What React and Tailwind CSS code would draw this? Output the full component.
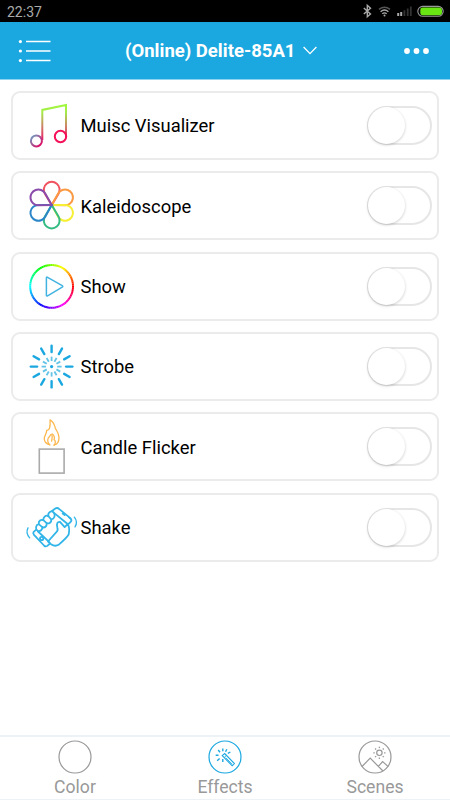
import React from "react";

const BLUE = "#1ba8e0";

function MusicIcon() {
  return (
    <svg className="h-[65px] w-[60px] shrink-0" viewBox="20 93 60 65" fill="none" strokeWidth="2">
      <defs>
        <linearGradient id="stem" gradientUnits="userSpaceOnUse" x1="0" y1="104" x2="0" y2="140">
          <stop offset="0" stopColor="#a0fa3c" />
          <stop offset="0.25" stopColor="#a5e84a" />
          <stop offset="0.65" stopColor="#cf7b68" />
          <stop offset="1" stopColor="#ee1560" />
        </linearGradient>
        <linearGradient id="note" x1="0" y1="0" x2="1" y2="1">
          <stop offset="0.1" stopColor="#7396bd" />
          <stop offset="0.9" stopColor="#e00b65" />
        </linearGradient>
      </defs>
      <path d="M42.3 140V109.9L66 104.9V137" stroke="url(#stem)" />
      <circle cx="36.4" cy="140.9" r="5.5" stroke="url(#note)" />
      <circle cx="60.5" cy="136.5" r="5.7" stroke="#f5105a" />
    </svg>
  );
}

const petals = ["#f0525f", "#fb9a42", "#f7ef32", "#35bc83", "#2b86c8", "#8a4bab"];

function FlowerIcon() {
  return (
    <svg className="h-[65px] w-[60px] shrink-0" viewBox="20 173.3 60 65" fill="none" strokeWidth="2">
      <g transform="translate(51.7 205.4)">
        {petals.map((color, i) => (
          <path key={color} d="M0 0L-6.8 -11.4A7.9 7.9 0 1 1 6.8 -11.4Z" stroke={color} transform={`rotate(${i * 60})`} />
        ))}
      </g>
    </svg>
  );
}

function ShowIcon() {
  return (
    <svg className="h-[65px] w-[60px] shrink-0" viewBox="20 253.6 60 65" fill="none">
      <g transform="translate(51.6 286)" strokeWidth="2">
        {Array.from({ length: 72 }, (_, i) => (
          <path key={i} d="M-1 -21.4H1" stroke={`hsl(${(450 - i * 5) % 360} 100% 50%)`} transform={`rotate(${i * 5})`} />
        ))}
      </g>
      <path d="M47.6 276.9L62.2 285.3Q63.4 286 62.2 286.8L47.6 295.4Q46.4 296 46.4 294.8V277.5Q46.4 276.2 47.6 276.9Z" stroke="#42b3e0" strokeWidth="1.5" />
    </svg>
  );
}

function StrobeIcon() {
  return (
    <svg className="h-[65px] w-[60px] shrink-0" viewBox="20 333.9 60 65" fill="none" strokeLinecap="round">
      <g transform="translate(51.6 366.5)">
        {Array.from({ length: 12 }, (_, i) => (
          <g key={i} transform={`rotate(${i * 30})`}>
            <path d="M0 -14.5V-20.8" stroke={BLUE} strokeWidth="2.4" />
            <path d="M0 -5.6V-10" stroke="#63c4e6" strokeWidth="1.8" strokeLinecap="butt" />
          </g>
        ))}
        <circle r="1.6" fill={BLUE} />
      </g>
    </svg>
  );
}

function CandleIcon() {
  return (
    <svg className="h-[65px] w-[60px] shrink-0" viewBox="20 414.2 60 65" fill="none">
      <g transform="translate(20 412) scale(.33333)" stroke="#fcb64c" strokeWidth="3.8" strokeLinejoin="round" strokeLinecap="round">
        <path d="M90 99C78 97 71 88 73 77C76 68 80 63 80 56C88 57 92 46 90 24C99 30 104 40 106 49C109 56 118 65 117 78C117 91 111 98 102 100" />
        <path d="M88 98C81 90 82 80 88 75C91 71 91 66 98 67C103 73 105 78 102 83C108 88 107 95 102 100" />
        <path d="M96 71C98 78 95 82 95 88" />
      </g>
      <rect x="39.3" y="449.3" width="24.8" height="24" stroke="#aaa" strokeWidth="1.6" />
    </svg>
  );
}

function ShakeIcon() {
  return (
    <svg className="h-[65px] w-[60px] shrink-0 overflow-visible" viewBox="20 494.5 60 65" fill="none">
      <g transform="translate(20 495) scale(.33333)" stroke="#32b5e8" strokeWidth="5.4" strokeLinecap="round" strokeLinejoin="round">
        <path d="M48 103L41 109Q38 113 42 118L72 150Q77 155 82 151L90 144" />
        <path d="M95 47L106 39Q112 35 118 41L151 68Q157 74 152 79L145 86" />
        <path d="M54 108L87 139" />
        <path d="M102 52L141 84" />
        <circle cx="65" cy="129" r="5" />
        <path d="M128 54L134 59" />
        <path d="M53 106C45 101 47 88 56 86C55 76 63 71 70 74C69 64 78 58 85 62C83 50 94 44 101 51C108 61 102 70 94 72C95 80 87 86 80 83C81 93 74 98 67 95C68 102 61 109 53 106Z" />
        <path d="M56 86L67 95M70 74L80 83M85 62L94 72" />
        <path d="M84 138L109 110C114 106 114 102 112 96C109 85 112 78 120 79L134 95L143 86C149 94 148 107 146 117C140 127 126 139 116 148C109 152 100 151 93 146Z" />
        <path d="M24 97C19 107 21 118 29 127M146 65L151 70M163 65C171 75 171 85 165 94" strokeWidth="4" />
      </g>
    </svg>
  );
}

const effects = [
  { name: "Muisc Visualizer", Icon: MusicIcon },
  { name: "Kaleidoscope", Icon: FlowerIcon },
  { name: "Show", Icon: ShowIcon },
  { name: "Strobe", Icon: StrobeIcon },
  { name: "Candle Flicker", Icon: CandleIcon },
  { name: "Shake", Icon: ShakeIcon },
];

function Toggle() {
  return (
    <button role="switch" aria-checked="false" className="ml-auto mr-[5px] flex h-[39px] w-[65px] items-center rounded-full border-2 border-[#e6e6e6] bg-white">
      <span className="-ml-px size-[37px] shrink-0 rounded-full bg-white shadow-[0_1px_3px_rgba(0,0,0,0.2)]" />
    </button>
  );
}

function StatusBar() {
  return (
    <div className="flex h-[22px] items-center bg-black pl-[7px] pr-[6px]">
      <span className="pt-[2px] text-[14px] leading-none text-[#aaa]">22:37</span>
      <svg className="ml-auto h-[22px] w-[90px]" viewBox="354 0 90 22" fill="none">
        <path d="M363.8 8L370.5 14L367.3 16.8V5.3L370.5 8.2L363.8 14" stroke="#aaa" strokeWidth="1.4" />
        <g stroke="#aaa" strokeWidth="1.4">
          <path d="M379 9.4Q384.5 5 390 9.4" stroke="#555" />
          <path d="M380.6 11.7Q384.5 8.4 388.4 11.7" />
          <path d="M382.3 13.7Q384.5 12 386.7 13.7" />
        </g>
        <circle cx="384.5" cy="15.4" r="1" fill="#aaa" />
        <path d="M398.2 16V13M401.2 16V12" stroke="#aaa" strokeWidth="2" />
        <path d="M404.4 16V10.3M407.7 16V8.5M410.8 16V6.5" stroke="#333" strokeWidth="1.8" />
        <rect x="417.8" y="6.4" width="25.4" height="9.8" rx="4.9" stroke="#999" strokeWidth="1.1" />
        <rect x="420" y="7.6" width="22" height="7.6" rx="3" fill="#6ae514" />
        <path d="M419.8 8.5V14" stroke="#000" strokeWidth="1" />
      </svg>
    </div>
  );
}

function Header() {
  return (
    <header className="flex h-[58px] items-center border-b border-[#8dd3ef] bg-[#1ba8e0] pl-[18px] pr-[20.5px] text-white">
      <svg className="h-[26px] w-[34px]" viewBox="18 38 34 26" stroke="white" strokeWidth="1.5" fill="white">
        <path d="M26 41.6H50.5M26 51H50.5M26 60.6H50.5" />
        <g stroke="none">
          <circle cx="20.4" cy="41.6" r="1.6" />
          <circle cx="20.4" cy="51" r="1.6" />
          <circle cx="20.4" cy="60.6" r="1.6" />
        </g>
      </svg>
      <div className="ml-[73px] flex items-center gap-[8px]">
        <h1 className="pt-px text-[18.5px] font-bold leading-none whitespace-nowrap">(Online) Delite-85A1</h1>
        <svg className="h-[9px] w-[14px]" viewBox="0 0 14 9" fill="none" stroke="white" strokeWidth="1.3">
          <path d="M0.6 1L7 7.6L13.4 1" />
        </svg>
      </div>
      <svg className="ml-auto h-[8px] w-[27px]" viewBox="0 0 27 8" fill="white">
        <circle cx="4" cy="4" r="2.9" />
        <circle cx="13.5" cy="4" r="2.9" />
        <circle cx="23" cy="4" r="2.9" />
      </svg>
    </header>
  );
}

function ColorTab() {
  return <circle cx="17" cy="17" r="16" />;
}

function EffectsTab() {
  return (
    <>
      <circle cx="17" cy="17" r="16" />
      <path d="M14.2 15.6L16.7 13.5L26.4 23.6L24.2 25.8Z" strokeWidth="1.1" />
      <path d="M16.1 17.6L18.4 15.4M17.8 17.7L24.2 24.4" strokeWidth="0.9" />
      <path d="M14.8 8.4V11.2M18.8 9.2L17.6 11.7M22.4 12L19.8 13.4M10.2 10L12 12.3M7.7 15.3H10.5M9.2 20.8L11.6 18.6M14.8 19V22" strokeWidth="1.4" />
    </>
  );
}

function ScenesTab() {
  return (
    <>
      <circle cx="17" cy="17" r="16" />
      <path d="M4 26.5L12.2 18.2L25 31M20.4 26.4L24.6 21.6L30 26.4M19.5 25.4L21.2 27.2" />
      <circle cx="21.4" cy="12.8" r="2.7" />
      <g transform="translate(21.4 12.8)" strokeWidth="1.3">
        {Array.from({ length: 8 }, (_, i) => (
          <path key={i} d="M0 -4.7V-6.1" transform={`rotate(${i * 45})`} />
        ))}
      </g>
    </>
  );
}

const tabs = [
  { name: "Color", Icon: ColorTab, active: false },
  { name: "Effects", Icon: EffectsTab, active: true },
  { name: "Scenes", Icon: ScenesTab, active: false },
];

export default function App() {
  return (
    <div className="flex h-[800px] w-[450px] flex-col overflow-hidden bg-white font-[Roboto,'Liberation_Sans',sans-serif]">
      <StatusBar />
      <Header />
      <main className="flex flex-1 flex-col gap-[11.3px] px-[11.4px] pt-[11.2px]">
        {effects.map(({ name, Icon }) => (
          <section key={name} className="flex h-[69px] shrink-0 items-center rounded-[9px] border-2 border-[#ebebeb] pl-[6.6px]">
            <Icon />
            <span className="ml-[0.5px] pt-[2px] text-[18.4px] leading-none text-black">{name}</span>
            <Toggle />
          </section>
        ))}
      </main>
      <nav className="grid h-[65px] shrink-0 grid-cols-3 border-t-2 border-b border-[#edf2f6]">
        {tabs.map(({ name, Icon, active }) => (
          <button key={name} className="flex flex-col items-center pt-[3px]">
            <svg className={active ? "size-[34px] text-[#1ba8e0]" : "size-[34px] text-[#999]"} viewBox="0 0 34 34" fill="none" stroke="currentColor" strokeWidth="1.2">
              <Icon />
            </svg>
            <span className="mt-[3px] text-[17.6px] leading-[20px] text-[#999]">{name}</span>
          </button>
        ))}
      </nav>
    </div>
  );
}
